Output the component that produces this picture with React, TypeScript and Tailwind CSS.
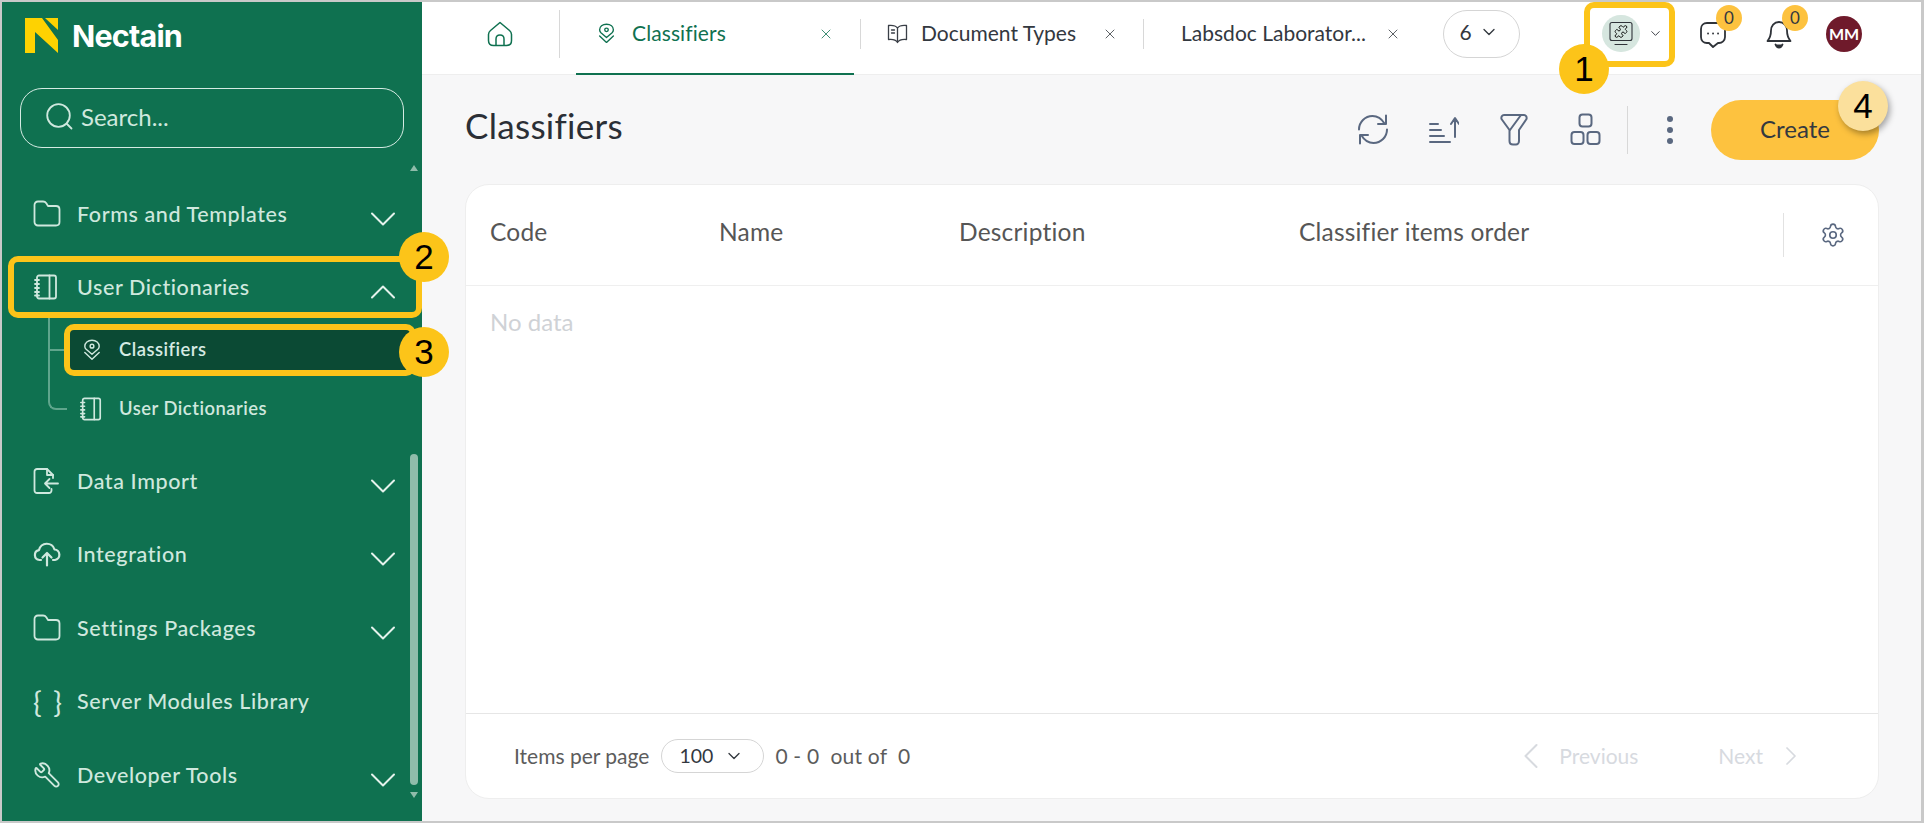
import { ChevronDown, ChevronLeft, ChevronRight, ChevronUp, Puzzle, Settings, Wrench, X } from "lucide-react";
import type { ReactNode } from "react";

const lato = "font-['Lato',sans-serif]";

function FolderIcon() {
    return (
        <svg width="28" height="27" viewBox="0 0 28 27" fill="none" stroke="currentColor" strokeWidth="1.800" strokeLinejoin="round">
            <path d="M1.500 5c0-2 1.500-3.500 3.500-3.500h5c1.500 0 2.500.6 3.300 1.800L15 6h8c2 0 3.500 1.500 3.500 3.500V22c0 2-1.500 3.500-3.500 3.500H5c-2 0-3.500-1.500-3.500-3.500V5Z" />
        </svg>
    );
}

function Notebook({ size = 26 }: { size?: number }) {
    return (
        <svg width={size} height={size} viewBox="0 0 26 26" fill="none" stroke="currentColor" strokeWidth="1.800" strokeLinecap="round" strokeLinejoin="round">
            <rect x="4" y="1.500" width="19" height="23" rx="2" />
            <path d="M16.500 1.500v23M2 6h4M2 10h4M2 14h4M2 18h4M2 21.500h4" />
        </svg>
    );
}

function ClassifierIcon({ size = 22 }: { size?: number }) {
    return (
        <svg width={size} height={size} viewBox="0 0 22 26" fill="none" stroke="currentColor" strokeWidth="1.700" strokeLinecap="round" strokeLinejoin="round">
            <path d="M11 1.500c5 0 8.500 3 8.500 7 0 1.500-.6 2.700-1.600 3.600L11 18l-6.900-5.900C3.100 11.200 2.500 10 2.500 8.500c0-4 3.500-7 8.500-7Z" />
            <circle cx="11" cy="8.500" r="2.200" />
            <path d="M2.500 16l8.500 8 8.500-8" />
        </svg>
    );
}

function ImportIcon() {
    return (
        <svg width="26" height="28" viewBox="0 0 26 28" fill="none" stroke="currentColor" strokeWidth="1.800" strokeLinecap="round" strokeLinejoin="round">
            <path d="M20 11V8l-6-6H4a2.500 2.500 0 0 0-2.500 2.500v19A2.500 2.500 0 0 0 4 26h12a2.500 2.500 0 0 0 2.500-2.500V22" />
            <path d="M14 2v6h6" />
            <path d="M25 16.500H12M16.500 12l-4.500 4.500 4.500 4.500" />
        </svg>
    );
}

function CloudIcon() {
    return (
        <svg width="28" height="26" viewBox="0 0 28 26" fill="none" stroke="currentColor" strokeWidth="2.200" strokeLinecap="round" strokeLinejoin="round">
            <path d="M8 19H6.500A5 5 0 0 1 6 9.100 8 8 0 0 1 21.500 8.500 5.300 5.300 0 0 1 22 19h-2" />
            <path d="M14 24.500V12.500M9.500 16.500l4.500-4.500 4.500 4.500" />
        </svg>
    );
}

function HomeIcon() {
    return (
        <svg width="26" height="26" viewBox="0 0 26 26" fill="none" stroke="#0f7150" strokeWidth="1.500" strokeLinejoin="round">
            <path d="M13 1.500 3.500 9.500C2 10.800 1.500 12 1.500 13.500v6c0 3 2 5 5 5h13c3 0 5-2 5-5v-6c0-1.500-.5-2.700-2-4L13 1.500Z" />
            <path d="M9 24.500V18c0-2.500 1.500-4 4-4s4 1.500 4 4v6.500" />
        </svg>
    );
}

function BookIcon() {
    return (
        <svg width="21" height="20" viewBox="0 0 21 20" fill="none" stroke="#3a3f47" strokeWidth="1.300" strokeLinejoin="round" strokeLinecap="round">
            <path d="M10.500 4C9 2 6 1 1.500 1.500v14c4.500-.5 7.500.5 9 3 1.500-2.500 4.500-3.500 9-3v-14C15 1 12 2 10.500 4Zm0 0v14.500" />
            <path d="M4.500 6h3M4.500 9h3" />
        </svg>
    );
}

function ChatIcon() {
    return (
        <svg width="28" height="30" viewBox="0 0 28 30" fill="none" stroke="#2f3339" strokeWidth="1.800" strokeLinejoin="round" strokeLinecap="round">
            <path d="M8 4h12c3 0 6 2.500 6 6v8c0 3.500-3 6-6 6h-1l-5 4-4-4H8c-3.500 0-6-2.500-6-6v-8c0-3.500 2.500-6 6-6Z" />
            <path d="M9 14.500h.1M14 14.500h.1M19 14.500h.1" />
        </svg>
    );
}

function BellIcon() {
    return (
        <svg width="26" height="30" viewBox="0 0 26 30" fill="none" stroke="#2f3339" strokeWidth="1.800" strokeLinejoin="round" strokeLinecap="round">
            <path d="M13 3c-5 0-8 4-8 8.500 0 5-1 7.500-3.500 10.500h23C22 19 21 16.500 21 11.500 21 7 18 3 13 3Z" />
            <path d="M9.500 25.500c.7 2 2 3 3.500 3s2.800-1 3.500-3" fill="#2f3339" />
        </svg>
    );
}

function WorkspaceIcon() {
    return (
        <svg width="24" height="25" viewBox="0 0 24 25" fill="none" stroke="#2f3339" strokeWidth="1.100" strokeLinejoin="round" strokeLinecap="round">
            <rect x="1" y="1.500" width="22" height="18" rx="2" />
            <path d="M6 23.500h12" />
            <Puzzle x={5} y={3.500} width={14} height={14} strokeWidth={1.500} />
        </svg>
    );
}

function Badge({ n, className }: { n: number; className: string }) {
    return (
        <div className={`absolute z-20 flex h-[50px] w-[50px] items-center justify-center rounded-full font-['Liberation_Sans',sans-serif] text-[35px] text-black ${className}`}>
            {n}
        </div>
    );
}

function MenuRow({ icon, label, open, chevron = true }: { icon: ReactNode; label: string; open?: boolean; chevron?: boolean }) {
    return (
        <div className="flex h-[73.500px] items-center pl-[31px] pr-[17px]">
            <div className="flex w-[44px] shrink-0 items-center text-[#cfe8de]">{icon}</div>
            <span className="flex-1 text-[21.500px] font-medium tracking-[0.6px] text-[#cfe8de]">{label}</span>
            {chevron && (open
                ? <ChevronUp size={44} strokeWidth={1.100} className="-mb-[10px] text-[#e4f2ec]" />
                : <ChevronDown size={44} strokeWidth={1.100} className="-mb-[10px] text-[#e4f2ec]" />)}
        </div>
    );
}

export default function App() {
    return (
        <div className={`relative flex h-screen w-screen overflow-hidden border-t-2 border-r-[3px] border-b-2 border-l-2 border-[#c9c9c9] bg-[#f7f7f8] ${lato}`}>
            {/* Sidebar */}
            <aside className="relative flex w-[420px] shrink-0 flex-col bg-[#0f7150]">
                <div className="flex h-[86px] items-start pt-[16px] pl-[23px]">
                    <svg width="33" height="35" viewBox="0 0 33 35" fill="#fed201">
                        <path d="M0 0h17l16 22v13L10 14v21H0Z" />
                        <path d="M20 0h13v12Z" />
                    </svg>
                    <span className="ml-[14px] font-['Inter',sans-serif] text-[30.500px] font-bold leading-[36px] tracking-[-0.8px] text-white">Nectain</span>
                </div>
                <div className="mr-[18px] ml-[18px] flex h-[60px] items-center rounded-[22px] border border-[#d5ebe3] pb-[3px] pl-[25px] text-[#cfe8de]">
                    <svg width="27" height="27" viewBox="0 0 27 27" fill="none" stroke="currentColor" strokeWidth="1.800" strokeLinecap="round">
                        <circle cx="12.500" cy="12.500" r="11.300" />
                        <path d="m21 21 4.500 4.500" />
                    </svg>
                    <span className="ml-[8px] text-[24px]">Search...</span>
                </div>
                <nav className="mt-[29px] flex flex-col">
                    <MenuRow icon={<FolderIcon />} label="Forms and Templates" />
                    <MenuRow icon={<Notebook />} label="User Dictionaries" open />
                    <div className="flex h-[120px] flex-col text-[#cfe8de]">
                        <div className="ml-[62px] flex h-[52px] w-[352px] items-center rounded-[10px] border-[6px] border-[#fcc419] bg-[#0b4a34] pl-[11px]">
                            <div className="flex w-[38px] shrink-0"><ClassifierIcon /></div>
                            <span className="text-[18.400px] font-semibold tracking-[0.5px] text-[#d6ebe3]">Classifiers</span>
                        </div>
                        <div className="mt-[3px] flex h-[59px] items-center pl-[77px]">
                            <div className="flex w-[40px] shrink-0"><Notebook size={24} /></div>
                            <span className="text-[18.400px] font-semibold tracking-[0.5px]">User Dictionaries</span>
                        </div>
                    </div>
                    <MenuRow icon={<ImportIcon />} label="Data Import" />
                    <MenuRow icon={<CloudIcon />} label="Integration" />
                    <MenuRow icon={<FolderIcon />} label="Settings Packages" />
                    <MenuRow icon={<span className="text-[29px] leading-none tracking-[2px]">{"{ }"}</span>} label="Server Modules Library" chevron={false} />
                    <MenuRow icon={<Wrench size={28} strokeWidth={1.600} className="-scale-x-100" />} label="Developer Tools" />
                </nav>

                {/* Scrollbar */}
                <div className="absolute top-[163px] right-[4px] h-0 w-0 border-x-[4px] border-b-[6px] border-x-transparent border-b-[#8fbcaa]" />
                <div className="absolute top-[452px] right-[4px] h-[331px] w-[8px] rounded-full bg-[#8fbcaa]" />
                <div className="absolute top-[790px] right-[4px] h-0 w-0 border-x-[4px] border-t-[6px] border-x-transparent border-t-[#8fbcaa]" />

                {/* Tree lines */}
                <div className="absolute top-[315px] left-[46px] h-[93px] w-[19px] rounded-bl-[8px] border-b-2 border-l-2 border-[#5fa58c]" />
                <div className="absolute top-[347px] left-[47px] h-[2px] w-[15px] bg-[#5fa58c]" />

                {/* Highlight round the open group */}
                <div className="absolute top-[254px] left-[6px] h-[62px] w-[414px] rounded-[10px] border-[6px] border-[#fcc419]" />
            </aside>

            {/* Main */}
            <main className="flex min-w-0 flex-1 flex-col">
                <header className="flex h-[73px] shrink-0 items-center border-b border-[#eeeeee] bg-white pb-[9px]">
                    <div className="flex h-[48px] w-[138px] shrink-0 items-center pl-[65px]">
                        <HomeIcon />
                        <div className="ml-[46px] h-[48px] w-px bg-[#d8d8d8]" />
                    </div>
                    <div className="ml-[16px] flex h-[73px] w-[278px] items-center self-start border-b-2 border-[#0f7150] pb-[9px] pl-[20px] text-[#0f7150]">
                        <span className="mr-[15px] flex"><ClassifierIcon size={21} /></span>
                        <span className="pb-[1px] text-[21px] tracking-[0.1px]">Classifiers</span>
                    </div>
                    <X size={16} strokeWidth={1.200} className="-ml-[36px] text-[#0f7150]" />
                    <div className="ml-[26px] h-[30px] w-px bg-[#d8d8d8]" />
                    <div className="ml-[26px] flex items-center text-[#33383f]">
                        <BookIcon />
                        <span className="ml-[13px] pb-[1px] text-[21px]">Document Types</span>
                    </div>
                    <X size={16} strokeWidth={1.200} className="ml-[26px] text-[#33383f]" />
                    <div className="ml-[25px] h-[30px] w-px bg-[#d8d8d8]" />
                    <span className="ml-[37px] w-[187px] whitespace-nowrap pb-[1px] text-[21px] text-[#33383f]">Labsdoc Laborator...</span>
                    <X size={16} strokeWidth={1.200} className="ml-[17px] text-[#33383f]" />
                    <div className="ml-[42px] flex h-[48px] w-[77px] items-center justify-center gap-[7px] rounded-full border border-[#d5d5d5] pr-[5px] pb-[3px] text-[21px] text-[#33383f]">
                        6 <ChevronDown size={20} strokeWidth={1.600} />
                    </div>
                    <div className="ml-[82px] flex items-center">
                        <div className="flex h-[37px] w-[38px] items-center justify-center rounded-full bg-[#d6e6df]"><WorkspaceIcon /></div>
                        <ChevronDown size={15} strokeWidth={1.500} className="ml-[8px] text-[#33383f]" />
                    </div>
                    <div className="relative ml-[36px] flex">
                        <ChatIcon />
                        <span className="absolute -top-[14px] left-[17px] flex h-[26px] w-[26px] items-center justify-center rounded-full bg-[#fdc23f] text-[17px] text-[#33383f]">0</span>
                    </div>
                    <div className="relative ml-[39px] flex">
                        <BellIcon />
                        <span className="absolute -top-[14px] left-[16px] flex h-[26px] w-[26px] items-center justify-center rounded-full bg-[#fdc23f] text-[17px] text-[#33383f]">0</span>
                    </div>
                    <div className="ml-[34px] flex h-[36px] w-[36px] items-center justify-center rounded-full bg-[#6f1a2b] text-[16px] font-bold text-white">MM</div>
                </header>

                <div className="flex min-h-0 flex-1 flex-col pr-[42px] pb-[22px] pl-[43px]">
                    <div className="flex h-[109px] shrink-0 items-center">
                        <h1 className="flex-1 pb-[8px] text-[35px] font-normal tracking-[0.3px] text-[#2b2f36]">Classifiers</h1>
                        <div className="flex items-center text-[#5a6880]">
                            <svg width="32" height="33" viewBox="0 0 32 33" fill="none" stroke="currentColor" strokeWidth="2" strokeLinecap="round" strokeLinejoin="round">
                                <path d="M2 16.500C2 9 8 3 15.500 3c5 0 9 2.500 12 7.500" />
                                <path d="M29 2.500v8.500h-8" />
                                <path d="M30 16.500C30 24 24 30 16.500 30c-5 0-9-2.500-12-7.500" />
                                <path d="M3 30.500V22h8" />
                            </svg>
                            <svg className="ml-[40px]" width="30" height="28" viewBox="0 0 30 28" fill="none" stroke="currentColor" strokeWidth="2" strokeLinecap="round" strokeLinejoin="round">
                                <path d="M1 8h8M1 14h11M1 20h14M1 26h20M26 21V3M22 8l4-6 4 6" />
                            </svg>
                            <svg className="ml-[41px]" width="28" height="33" viewBox="0 0 28 33" fill="none" stroke="currentColor" strokeWidth="2" strokeLinecap="round" strokeLinejoin="round">
                                <path d="M4 2h20c2 0 3 2 2.500 4L19 17v11c0 2-1.500 3.500-3 3.500h-3c-2 0-3.500-1.500-3.500-3.500V17L1.500 6C1 4 2 2 4 2Z" />
                                <path d="M10 17 21 2" />
                            </svg>
                            <svg className="ml-[42px]" width="31" height="33" viewBox="0 0 31 33" fill="none" stroke="currentColor" strokeWidth="2" strokeLinejoin="round">
                                <rect x="9.500" y="1.500" width="12" height="12" rx="3" />
                                <rect x="1.500" y="19" width="12" height="12" rx="3" />
                                <rect x="17.500" y="19" width="12" height="12" rx="3" />
                            </svg>
                            <div className="ml-[26px] h-[48px] w-px bg-[#d8d8d8]" />
                            <div className="ml-[39px] flex flex-col gap-[5px]">
                                <span className="h-[6px] w-[6px] rounded-full bg-[#5a6880]" />
                                <span className="h-[6px] w-[6px] rounded-full bg-[#5a6880]" />
                                <span className="h-[6px] w-[6px] rounded-full bg-[#5a6880]" />
                            </div>
                        </div>
                        <button className="ml-[38px] h-[60px] w-[168px] rounded-full bg-[#fdc23f] pb-[1px] text-[24px] text-[#33383f]">Create</button>
                    </div>

                    <section className="flex min-h-0 flex-1 flex-col rounded-[24px] border border-[#eeeeee] bg-white">
                        <div className="flex h-[101px] shrink-0 items-center border-b border-[#efefef] text-[24.500px] tracking-[0.2px] text-[#565656]">
                            <span className="mb-[6px] ml-[24px] w-[229px]">Code</span>
                            <span className="mb-[6px] w-[240px]">Name</span>
                            <span className="mb-[6px] w-[340px]">Description</span>
                            <span className="mb-[6px] w-[484px]">Classifier items order</span>
                            <div className="h-[44px] w-px bg-[#e2e2e2]" />
                            <Settings size={26} strokeWidth={1.500} className="ml-[36px] text-[#5a6880]" />
                        </div>
                        <div className="flex-1 pt-[18px] pl-[24px] text-[24px] text-[#cfd2d6]">No data</div>
                        <div className="flex h-[85px] shrink-0 items-center border-t border-[#e6e6e6] text-[21px] text-[#5c5c5c]">
                            <span className="ml-[48px]">Items per page</span>
                            <div className="ml-[12px] flex h-[34px] w-[103px] items-center justify-between rounded-full border border-[#d5d5d5] pr-[19px] pl-[17px] text-[#33383f]">
                                <span className="text-[19.500px]">100</span>
                                <ChevronDown size={20} strokeWidth={1.600} />
                            </div>
                            <span className="ml-[11px] whitespace-pre tracking-[0.2px]">0 - 0  out of  0</span>
                            <div className="ml-auto flex items-center text-[#d7dadf]">
                                <ChevronLeft size={44} strokeWidth={1.100} className="-my-[10px]" />
                                <span className="ml-[6px] w-[159px]">Previous</span>
                                <span>Next</span>
                                <ChevronRight size={32} strokeWidth={1.300} className="ml-[12px]" />
                                <div className="w-[71px]" />
                            </div>
                        </div>
                    </section>
                </div>
            </main>

            {/* Annotations */}
            <div className="absolute top-[0px] left-[1582px] h-[65px] w-[91px] rounded-[10px] border-[6px] border-[#fcc419]" />
            <Badge n={1} className="top-[42px] left-[1557px] bg-[#fcc419]" />
            <Badge n={2} className="top-[230px] left-[397px] bg-[#fcc419]" />
            <Badge n={3} className="top-[325px] left-[397px] bg-[#fcc419]" />
            <Badge n={4} className="top-[79px] left-[1836px] bg-[#fbe09c] shadow-[2px_3px_6px_rgba(0,0,0,0.35)]" />
        </div>
    );
}
